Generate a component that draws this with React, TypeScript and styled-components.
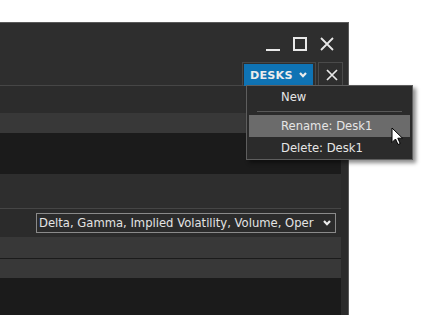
import React from "react"
import styled, {createGlobalStyle} from "styled-components"

const GlobalStyle = createGlobalStyle`
  html, body {
    margin: 0;
    padding: 0;
    background: #ffffff;
  }
  body {
    font-family: "DejaVu Sans", Verdana, sans-serif;
    overflow: hidden;
  }
`

const Page = styled.div`
  width: 435px;
  height: 315px;
  padding-top: 22px;
  box-sizing: border-box;
  position: relative;
  overflow: hidden;
`

const Window = styled.div`
  width: 349px;
  height: 293px;
  box-sizing: border-box;
  border-top: 1px solid #5a5a5a;
  border-right: 1px solid #5a5a5a;
  background: #2e2e2e;
  display: flex;
  flex-direction: column;
`

const TitleBar = styled.div`
  height: 62px;
  display: flex;
  flex-direction: column;
  justify-content: space-between;
  border-bottom: 1px solid #464646;
`

const Controls = styled.div`
  display: flex;
  justify-content: flex-end;
  gap: 13px;
  padding: 14px 14px 0 0;
`

const ControlIcon = styled.svg`
  width: 14px;
  height: 14px;
  display: block;
`

const TabRow = styled.div`
  height: 23px;
  display: flex;
  justify-content: flex-end;
  gap: 2px;
  padding-right: 5px;
`

const DesksButton = styled.div`
  width: 74px;
  height: 24px;
  box-sizing: border-box;
  border: 1px solid #474747;
  border-bottom: none;
  padding: 1px 2px 0 1px;
  display: flex;
`

const DesksFill = styled.div`
  flex: 1;
  background: #0f73b4;
  display: flex;
  align-items: center;
  padding-left: 6px;
  gap: 6px;
  color: #ececec;
  font-weight: bold;
  font-size: 11.2px;
  letter-spacing: 0.2px;
`

const TabClose = styled.div`
  width: 25px;
  height: 24px;
  box-sizing: border-box;
  border: 1px solid #4a4a4a;
  border-bottom: none;
  display: flex;
  align-items: center;
  justify-content: center;
  padding-left: 2px;
`

const Body = styled.div`
  flex: 1;
  display: flex;
`

const Main = styled.div`
  width: 341px;
  display: flex;
  flex-direction: column;
  background: #1b1b1b;
`

const Strip = styled.div`
  flex: 1;
  background: #2b2b2b;
`

type BandProps = {
  $h: number
  $bg: string
  $line?: string
}

const Band = styled.div<BandProps>`
  height: ${p => p.$h}px;
  flex-shrink: 0;
  background: ${p => p.$bg};
  border-bottom: ${p => p.$line ? `1px solid ${p.$line}` : "none"};
`

const SelectRow = styled.div`
  height: 28px;
  background: #2b2b2b;
  display: flex;
  align-items: center;
  justify-content: flex-end;
  padding-right: 5px;
  flex-shrink: 0;
`

const SelectBox = styled.div`
  width: 300px;
  height: 20px;
  box-sizing: border-box;
  border: 1px solid #8a8a8a;
  display: flex;
  align-items: center;
  padding: 0 4px 0 2px;
  color: #e4e4e4;
  font-size: 11.6px;
  white-space: nowrap;
`

const SelectText = styled.span`
  flex: 1;
  overflow: hidden;
`

const Menu = styled.div`
  position: absolute;
  left: 246px;
  top: 85px;
  width: 167px;
  box-sizing: border-box;
  background: #2b2b2b;
  border: 1px solid #5e5e5e;
  box-shadow: 3px 3px 4px rgba(0, 0, 0, 0.45);
  padding: 0 1px;
  display: flex;
  flex-direction: column;
`

type ItemProps = {
  $active?: boolean
}

const MenuItem = styled.div<ItemProps>`
  height: 22px;
  display: flex;
  align-items: center;
  padding-left: 32px;
  margin: 0 1px;
  font-size: 11.6px;
  color: #e6e6e6;
  background: ${p => p.$active ? "#6b6b6b" : "transparent"};
`

const MenuSep = styled.div`
  height: 1px;
  background: #595959;
  margin: 3px 9px;
`

const Cursor = styled.svg`
  position: absolute;
  left: 391px;
  top: 127px;
  width: 13px;
  height: 19px;
`

const Chevron = () => (
  <svg width={8} height={6} viewBox="0 0 8 6">
    <polyline points="1,1 4,4.2 7,1" fill="none" stroke="#ececec" strokeWidth="2.2" />
  </svg>
)

const App = () => {
  return (
    <>
      <GlobalStyle />
      <Page>
        <Window>
          <TitleBar>
            <Controls>
              <ControlIcon viewBox="0 0 14 14">
                <rect x="0" y="12" width="14" height="2" fill="#e8e8e8" />
              </ControlIcon>
              <ControlIcon viewBox="0 0 14 14">
                <rect x="1" y="1" width="12" height="12" fill="none" stroke="#e8e8e8" strokeWidth="2" />
              </ControlIcon>
              <ControlIcon viewBox="0 0 14 14">
                <path d="M1 1 L13 13 M13 1 L1 13" stroke="#e8e8e8" strokeWidth="1.8" />
              </ControlIcon>
            </Controls>
            <TabRow>
              <DesksButton>
                <DesksFill>
                  DESKS
                  <Chevron />
                </DesksFill>
              </DesksButton>
              <TabClose>
                <svg width="12" height="12" viewBox="0 0 12 12">
                  <path d="M1 1 L11 11 M11 1 L1 11" stroke="#e8e8e8" strokeWidth="1.7" />
                </svg>
              </TabClose>
            </TabRow>
          </TitleBar>
          <Body>
            <Main>
              <Band $h={27} $bg="#2c2c2c" />
              <Band $h={20} $bg="#383838" />
              <Band $h={41} $bg="#1b1b1b" />
              <Band $h={34} $bg="#2e2e2e" $line="#464646" />
              <SelectRow>
                <SelectBox>
                  <SelectText>Delta, Gamma, Implied Volatility, Volume, Oper</SelectText>
                  <Chevron />
                </SelectBox>
              </SelectRow>
              <Band $h={21} $bg="#383838" $line="#1b1b1b" />
              <Band $h={19} $bg="#383838" />
            </Main>
            <Strip />
          </Body>
        </Window>
        <Menu>
          <MenuItem>New</MenuItem>
          <MenuSep />
          <MenuItem $active>Rename: Desk1</MenuItem>
          <MenuItem>Delete: Desk1</MenuItem>
        </Menu>
        <Cursor viewBox="0 0 13 19">
          <path d="M1 1 L1 15.5 L4.5 12 L7 17.5 L9.2 16.5 L6.8 11.2 L11.5 11.2 Z" fill="#ffffff" stroke="#000000" strokeWidth="1" strokeLinejoin="round" />
        </Cursor>
      </Page>
    </>
  )
}

export default App
